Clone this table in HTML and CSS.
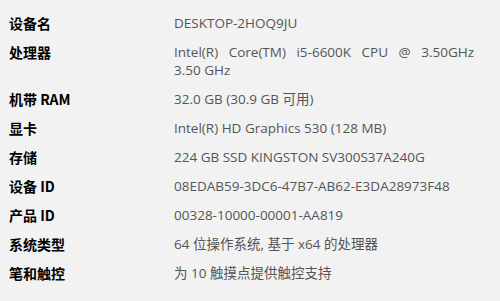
FILE: index.html
```html
<!DOCTYPE html>
<html>

<head>
  <meta charset="UTF-8">
  <title>设备规格</title>
  <link rel="stylesheet" href="styles.css">
</head>

<body>
  <div class="specs">
    <div class="spec-row">
      <div class="spec-label">设备名</div>
      <div class="spec-value">DESKTOP-2HOQ9JU</div>
    </div>
    <div class="spec-row">
      <div class="spec-label">处理器</div>
      <div class="spec-value">
        <span class="justify-line">Intel(R) Core(TM) i5-6600K CPU @ 3.50GHz</span>
        <span class="plain-line">3.50 GHz</span>
      </div>
    </div>
    <div class="spec-row">
      <div class="spec-label">机带 RAM</div>
      <div class="spec-value">32.0 GB (30.9 GB 可用)</div>
    </div>
    <div class="spec-row">
      <div class="spec-label">显卡</div>
      <div class="spec-value">Intel(R) HD Graphics 530 (128 MB)</div>
    </div>
    <div class="spec-row">
      <div class="spec-label">存储</div>
      <div class="spec-value">224 GB SSD KINGSTON SV300S37A240G</div>
    </div>
    <div class="spec-row">
      <div class="spec-label">设备 ID</div>
      <div class="spec-value">08EDAB59-3DC6-47B7-AB62-E3DA28973F48</div>
    </div>
    <div class="spec-row">
      <div class="spec-label">产品 ID</div>
      <div class="spec-value">00328-10000-00001-AA819</div>
    </div>
    <div class="spec-row">
      <div class="spec-label">系统类型</div>
      <div class="spec-value">64 位操作系统, 基于 x64 的处理器</div>
    </div>
    <div class="spec-row">
      <div class="spec-label">笔和触控</div>
      <div class="spec-value">为 10 触摸点提供触控支持</div>
    </div>
  </div>
</body>

</html>
```

FILE: styles.css
```css
html,
body {
  margin: 0;
  background: #f2f2f2;
}

body {
  font-family: "Open Sans", "Noto Sans CJK SC", sans-serif;
  font-size: 14px;
  line-height: 18px;
}

.specs {
  display: flex;
  flex-direction: column;
  gap: 11px;
  padding: 14px 0 0 9px;
}

.spec-row {
  display: flex;
}

.spec-label {
  width: 165px;
  flex: none;
  color: #000;
  font-weight: bold;
  font-family: "Noto Sans CJK SC", sans-serif;
}

.spec-value {
  width: 300px;
  color: #555;
  font-size: 13.5px;
}

.justify-line,
.plain-line {
  display: block;
}

.justify-line {
  text-align: justify;
  text-align-last: justify;
}
```
